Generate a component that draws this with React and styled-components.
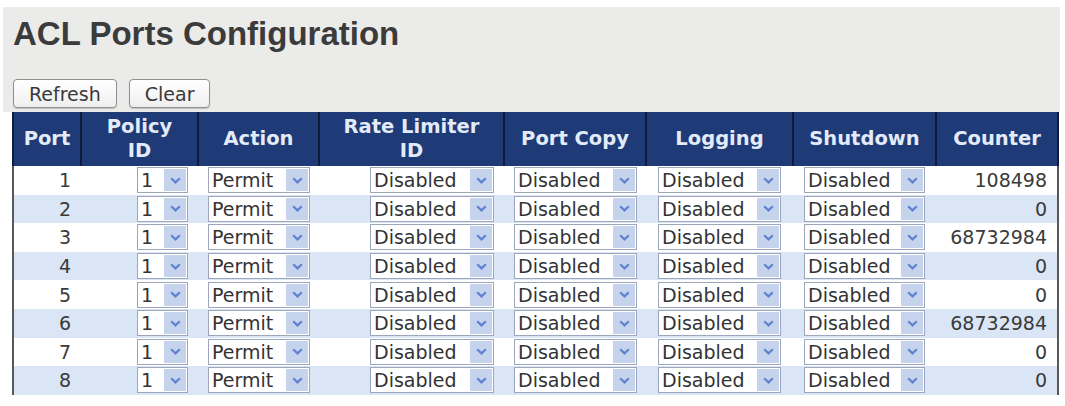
import React from 'react'
import styled, { createGlobalStyle } from 'styled-components'

const GlobalStyle = createGlobalStyle`
    body {
        margin: 0;
        background: #ffffff;
        font-family: "DejaVu Sans", Verdana, sans-serif;
    }
`

const ports = [
    { port: 1, counter: '108498' },
    { port: 2, counter: '0' },
    { port: 3, counter: '68732984' },
    { port: 4, counter: '0' },
    { port: 5, counter: '0' },
    { port: 6, counter: '68732984' },
    { port: 7, counter: '0' },
    { port: 8, counter: '0' },
]

function Chevron() {
    return (
        <svg width="11" height="7" viewBox="0 0 11 7">
            <path d="M1.2 1.2 L5.5 5.4 L9.8 1.2" fill="none" stroke="#5f83d2" strokeWidth="2.2" />
        </svg>
    )
}

function DropDown({ value, width }) {
    return (
        <SelectBox $width={width}>
            <SelectText>{value}</SelectText>
            <SelectArrow><Chevron /></SelectArrow>
        </SelectBox>
    )
}

function App() {
    return (
        <>
            <GlobalStyle />
            <Page>
                <Panel>
                    <Title>ACL Ports Configuration</Title>
                    <ButtonRow>
                        <Button type="button">Refresh</Button>
                        <Button type="button">Clear</Button>
                    </ButtonRow>
                </Panel>

                <PortTable>
                    <colgroup>
                        <col style={{ width: 68 }} />
                        <col style={{ width: 117 }} />
                        <col style={{ width: 121 }} />
                        <col style={{ width: 185 }} />
                        <col style={{ width: 142 }} />
                        <col style={{ width: 147 }} />
                        <col style={{ width: 143 }} />
                        <col style={{ width: 122 }} />
                    </colgroup>
                    <thead>
                        <tr>
                            <Th>Port</Th>
                            <Th>Policy<br />ID</Th>
                            <Th>Action</Th>
                            <Th>Rate Limiter<br />ID</Th>
                            <Th>Port Copy</Th>
                            <Th>Logging</Th>
                            <Th>Shutdown</Th>
                            <Th>Counter</Th>
                        </tr>
                    </thead>
                    <tbody>
                        {ports.map((p, i) => (
                            <Row key={p.port} $alt={i % 2 === 1}>
                                <Td $align="right">{p.port}</Td>
                                <Td $align="right"><DropDown value="1" width={51} /></Td>
                                <Td $align="center"><DropDown value="Permit" width={102} /></Td>
                                <Td $align="right"><DropDown value="Disabled" width={124} /></Td>
                                <Td $align="center"><DropDown value="Disabled" width={123} /></Td>
                                <Td $align="center"><DropDown value="Disabled" width={123} /></Td>
                                <Td $align="center"><DropDown value="Disabled" width={121} /></Td>
                                <Td $align="right">{p.counter}</Td>
                            </Row>
                        ))}
                    </tbody>
                </PortTable>
            </Page>
        </>
    )
}

export default App

const Page = styled.div`
    padding: 7px 0 0 3px;
    width: 1057px;
`

const Panel = styled.div`
    background: #ebebe9;
    padding: 8px 0 4px 10px;
`

const Title = styled.h1`
    margin: 0;
    font-family: "Liberation Sans", Arial, sans-serif;
    font-size: 33px;
    line-height: 38px;
    font-weight: bold;
    color: #3b3b3b;
`

const ButtonRow = styled.div`
    display: flex;
    gap: 12px;
    margin-top: 26px;
`

const Button = styled.button`
    height: 29px;
    padding: 0 15px;
    border: 1px solid #8f8f8f;
    border-radius: 4px;
    background: linear-gradient(#ffffff, #efefef);
    font-family: "DejaVu Sans", Verdana, sans-serif;
    font-size: 19px;
    color: #3a3a3a;
    box-shadow: 0 1px 1px rgba(0, 0, 0, 0.18);
`

const PortTable = styled.table`
    margin-left: 9px;
    width: 1045px;
    table-layout: fixed;
    border-collapse: collapse;
    border-left: 2px solid #585858;
    border-right: 2px solid #585858;
`

const Th = styled.th`
    height: 54px;
    padding: 0 4px;
    background: #1e3a77;
    border-left: 2px solid #0f1b3d;
    border-right: 2px solid #0f1b3d;
    color: #e3ebf8;
    font-size: 19.5px;
    font-weight: bold;
    line-height: 24px;
    text-align: center;
`

const Row = styled.tr`
    background: ${p => (p.$alt ? '#dae6f5' : '#ffffff')};
`

const Td = styled.td`
    height: 28.6px;
    padding: 0 10px;
    text-align: ${p => p.$align};
    vertical-align: middle;
    font-size: 19px;
    color: #3a3a3a;
    line-height: 20px;
`

const SelectBox = styled.div`
    display: inline-flex;
    align-items: stretch;
    box-sizing: border-box;
    width: ${p => p.$width}px;
    height: 26px;
    border: 1px solid #9ea6bc;
    background: #ffffff;
    vertical-align: middle;
    text-align: left;
`

const SelectText = styled.span`
    flex: 1;
    padding-left: 3px;
    font-size: 19px;
    line-height: 24px;
    color: #333333;
    white-space: nowrap;
    overflow: hidden;
`

const SelectArrow = styled.span`
    width: 22px;
    margin: 1px;
    display: flex;
    align-items: center;
    justify-content: center;
    background: #c6d3ed;
`
